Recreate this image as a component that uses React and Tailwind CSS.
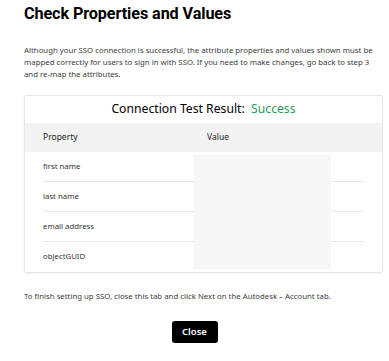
import React from 'react';

const rows = ['first name', 'last name', 'email address', 'objectGUID'];

const App = () => {
  return (
    <div className="w-[389px] h-[361px] bg-white overflow-hidden font-['Noto_Sans',sans-serif] text-[#3c3c3c]">
      <div className="px-6 pt-[3px]">
        <h1 className="font-['Roboto',sans-serif] text-[16.2px] leading-[22px] font-bold text-black tracking-[-0.1px]">Check Properties and Values</h1>
        <p className="mt-[19px] text-[7.8px] leading-[12px] whitespace-nowrap">
          Although your SSO connection is successful, the attribute properties and values shown must be<br />
          mapped correctly for users to sign in with SSO. If you need to make changes, go back to step 3<br />
          and re-map the attributes.
        </p>

        {/* tarjeta de resultado */}
        <div className="mt-[15px] w-[359px] border border-[#e6e6e6] rounded-[2px] shadow-[0_1px_2px_rgba(0,0,0,0.05)]">
          <div className="h-[27px] flex items-center justify-center text-[12.2px] text-black">
            Connection Test Result:&nbsp;&nbsp;<span className="text-[#2a9a5c]">Success</span>
          </div>
          <div className="h-[29px] bg-[#f3f3f3] flex items-center text-[8.5px] text-[#222]">
            <span className="pl-[18px] w-[182px]">Property</span>
            <span>Value</span>
          </div>
          <div className="relative">
            {rows.map((r, i) => (
              <div key={r} className="px-[18px]">
                <div className={`h-[30px] flex items-center text-[7.8px] text-[#333] ${i < rows.length - 1 ? 'border-b border-[#e8e8e8]' : ''}`}>
                  {r}
                </div>
              </div>
            ))}
            <div className="absolute left-[169px] top-[3px] w-[137px] h-[114px] bg-[#f6f6f6]" />
          </div>
        </div>

        <p className="mt-[17px] text-[7.8px] leading-[12px]">
          To finish setting up SSO, close this tab and click Next on the Autodesk – Account tab.
        </p>
        <div className="mt-[19px] flex justify-center">
          <button className="w-[46px] h-[22px] bg-black text-white text-[9.5px] font-semibold rounded-[3px]">Close</button>
        </div>
      </div>
    </div>
  );
};

export default App;
